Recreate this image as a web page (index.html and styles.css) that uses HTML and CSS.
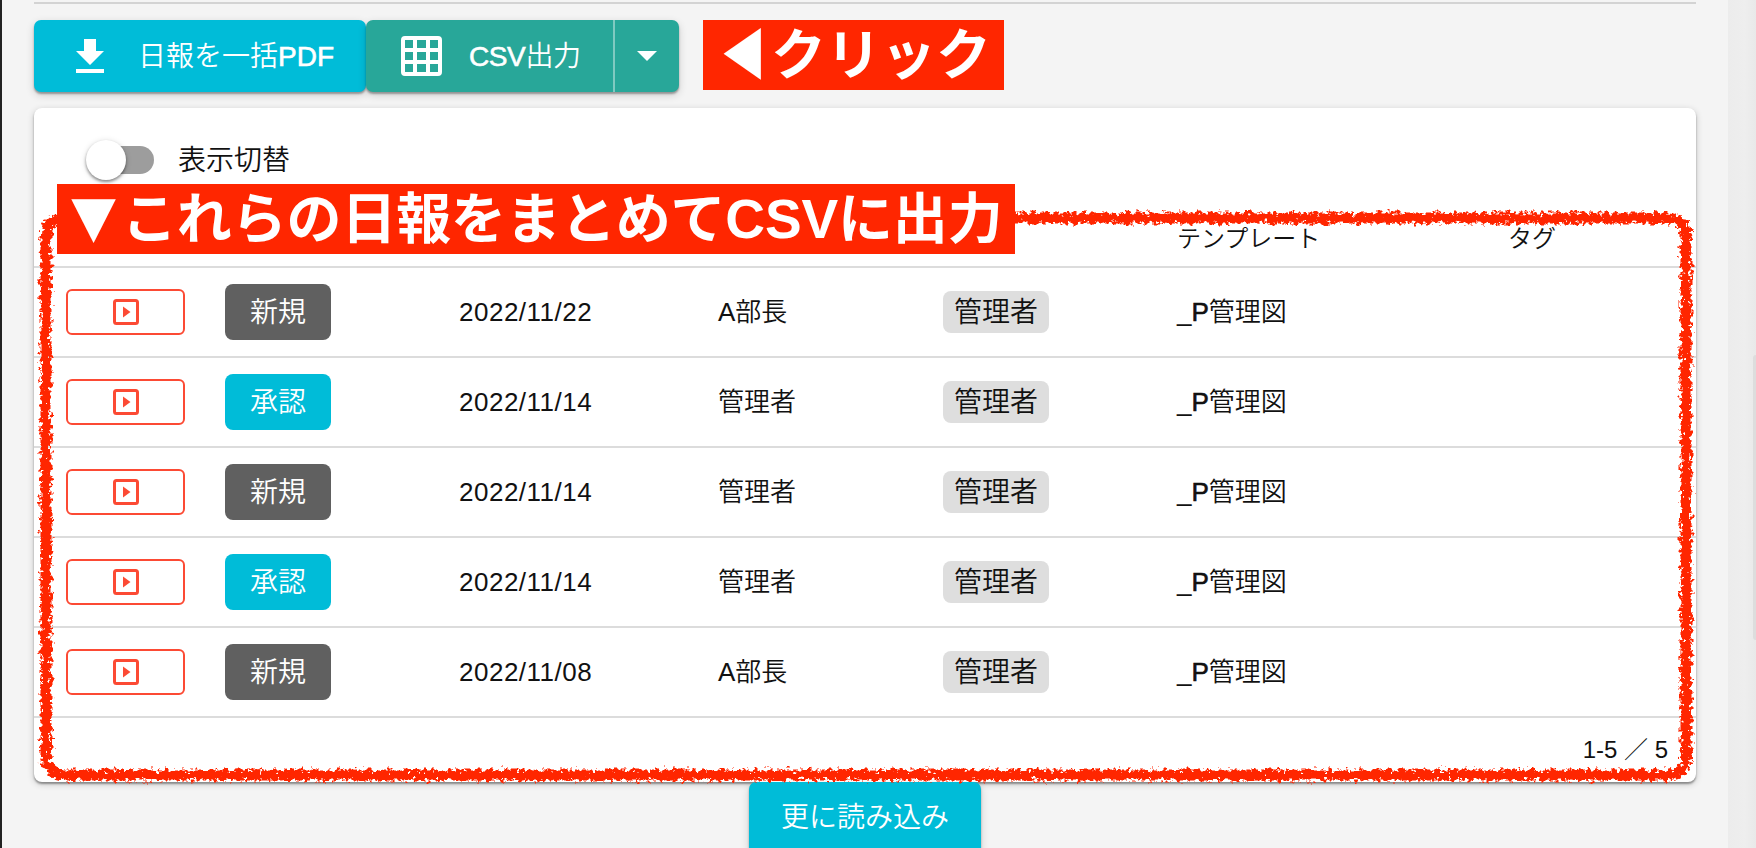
FILE: index.html
```html
<!DOCTYPE html>
<html lang="ja">
<head>
<meta charset="utf-8">
<title>日報一覧</title>
<link rel="stylesheet" href="styles.css">
</head>
<body>
<svg class="defs" width="0" height="0">
  <symbol id="play" viewBox="0 0 26 26"><rect x="1.500" y="1.500" width="23" height="23" rx="2" fill="none" stroke="currentColor" stroke-width="3"/><path d="M10 7.500v11l7.500-5.500z" fill="currentColor"/></symbol>
</svg>
<div class="app">
  <main class="page">
    <hr class="rule">
    <div class="toolbar">
      <button class="btn btn-pdf">
        <svg class="ico-dl" width="28" height="34" viewBox="0 0 28 34"><path d="M8 0h12v12h8L14 26 0 12h8zM0 30h28v4H0z" fill="#fff"/></svg>
        <span class="label">日報を一括<span class="latin">PDF</span></span>
      </button>
      <button class="btn btn-csv">
        <svg class="ico-grid" width="41" height="40" viewBox="0 0 41 40"><path fill="#fff" fill-rule="evenodd" d="M4 0h33q4 0 4 4v32q0 4-4 4H4q-4 0-4-4V4q0-4 4-4zM4 4v8h8V4zM16 4v8h9V4zM29 4v8h8V4zM4 16v8h8v-8zM16 16v8h9v-8zM29 16v8h8v-8zM4 28v8h8v-8zM16 28v8h9v-8zM29 28v8h8v-8z"/></svg>
        <span class="label csv"><span class="latin">CSV</span>出力</span>
        <span class="caret"><svg width="20" height="10" viewBox="0 0 20 10"><path d="M0 0h20L10 10z" fill="#fff"/></svg></span>
      </button>
      <div class="note note-click"><span class="tri tri-left">◀</span>クリック</div>
    </div>
    <section class="card">
      <div class="switch-row"><span class="switch"><span class="thumb"></span></span><span class="label">表示切替</span></div>
      <div class="row head"><span></span><span></span><span></span><span></span><span></span><span>テンプレート</span><span>タグ</span></div>
      <div class="row"><span class="play"><svg width="26" height="26"><use href="#play"/></svg></span><span class="state">新規</span><span class="date">2022/11/22</span><span>A部長</span><span class="chip">管理者</span><span>_<span class="latin">P</span>管理図</span><span></span></div>
      <div class="row"><span class="play"><svg width="26" height="26"><use href="#play"/></svg></span><span class="state ok">承認</span><span class="date">2022/11/14</span><span>管理者</span><span class="chip">管理者</span><span>_<span class="latin">P</span>管理図</span><span></span></div>
      <div class="row"><span class="play"><svg width="26" height="26"><use href="#play"/></svg></span><span class="state">新規</span><span class="date">2022/11/14</span><span>管理者</span><span class="chip">管理者</span><span>_<span class="latin">P</span>管理図</span><span></span></div>
      <div class="row"><span class="play"><svg width="26" height="26"><use href="#play"/></svg></span><span class="state ok">承認</span><span class="date">2022/11/14</span><span>管理者</span><span class="chip">管理者</span><span>_<span class="latin">P</span>管理図</span><span></span></div>
      <div class="row"><span class="play"><svg width="26" height="26"><use href="#play"/></svg></span><span class="state">新規</span><span class="date">2022/11/08</span><span>A部長</span><span class="chip">管理者</span><span>_<span class="latin">P</span>管理図</span><span></span></div>
      <div class="foot">1-5 ／ 5</div>
    </section>
    <button class="btn more">更に読み込み</button>
  </main>
  <aside class="rail"><span class="rail-thumb"></span></aside>

  <svg class="crayon" width="1756" height="848" viewBox="0 0 1756 848">
    <filter id="rough" filterUnits="userSpaceOnUse" x="0" y="180" width="1756" height="640">
      <feTurbulence type="fractalNoise" baseFrequency="0.22" numOctaves="3" seed="4" result="n"/>
      <feDisplacementMap in="SourceGraphic" in2="n" scale="11" xChannelSelector="R" yChannelSelector="G" result="d"/>
      <feTurbulence type="fractalNoise" baseFrequency="0.25" numOctaves="2" seed="9" result="m"/>
      <feColorMatrix in="m" type="matrix" values="0 0 0 0 0  0 0 0 0 0  0 0 0 0 0  0 0 0 14 -4" result="mask"/>
      <feComposite in="d" in2="mask" operator="in"/>
    </filter>
    <g fill="none" stroke="#ff2600" filter="url(#rough)">
      <rect x="46" y="218" width="1640" height="557" rx="18" stroke-width="11"/>
    </g>
    <filter id="core" filterUnits="userSpaceOnUse" x="0" y="180" width="1756" height="640">
      <feTurbulence type="fractalNoise" baseFrequency="0.16" numOctaves="3" seed="2" result="n"/>
      <feDisplacementMap in="SourceGraphic" in2="n" scale="8" xChannelSelector="R" yChannelSelector="G"/>
    </filter>
    <rect x="45.500" y="218" width="1641" height="557.500" rx="18" fill="none" stroke="#ff2600" stroke-width="5" filter="url(#core)"/>
  </svg>
  <div class="note note-list"><span class="tri tri-down">▼</span>これらの日報をまとめてCSVに出力</div>
</div>
</body>
</html>
```
FILE: styles.css
```css
* { box-sizing: border-box; }
body {
  margin: 0;
  height: 848px;
  overflow: hidden;
  background: #f4f4f4;
  color: #111;
  font: 350 26px/1 "Liberation Sans", "Noto Sans CJK JP", sans-serif;
}
.defs { position: absolute; }
.crayon { position: absolute; left: -2px; top: 0; pointer-events: none; }
.app {
  position: relative;
  display: flex;
  height: 848px;
  overflow: hidden;
  border-left: 2px solid #222;
}
.page {
  flex: 1;
  display: flex;
  flex-direction: column;
  padding: 2px 32px 0 32px;
}
.rail {
  width: 28px;
  padding: 355px 0 0 25px;
  background: linear-gradient(90deg, #ececec, #eee 60%, #e9e9e9);
}
.rail-thumb { display: block; height: 285px; background: #ddd; border-radius: 3px 0 0 3px; }
.rule { width: 100%; height: 2px; margin: 0 0 16px; border: 0; background: #d3d3d3; flex: none; }

.toolbar { display: flex; flex: none; height: 72px; margin-bottom: 16px; }
.btn {
  display: flex;
  align-items: center;
  height: 72px;
  padding: 0;
  border: 0;
  border-radius: 7px;
  background: #00bcd8;
  color: #fff;
  font: inherit;
  font-size: 28px;
  white-space: nowrap;
  box-shadow: 0 2px 2px rgba(0,0,0,.32), 0 3px 8px rgba(0,0,0,.16);
}
.label { padding-top: 2px; }
.csv { letter-spacing: -.4px; }
.latin { -webkit-text-stroke: .6px currentColor; }
.btn-pdf { width: 332px; padding-left: 42px; }
.ico-dl { margin-right: 34px; }
.btn-csv { width: 313px; padding-left: 35px; background: #28a799; }
.ico-grid { margin-right: 27px; }
.caret {
  display: flex;
  align-items: center;
  justify-content: center;
  width: 66px;
  height: 72px;
  margin-left: auto;
  border-left: 2px solid #7fcac1;
}

.note {
  height: 70px;
  background: #ff2600;
  color: #fff;
  font-size: 55px;
  font-weight: 700;
  line-height: 70px;
  white-space: nowrap;
}
.tri { display: inline-block; width: 55px; text-align: center; }
.tri-left { transform: scaleX(.83); }
.tri-down { transform: translate(-1px, -3px) scale(1.38, 1.36); }
.note-click { width: 301px; margin-left: 24px; padding-left: 13px; }
.note-list { position: absolute; left: 55px; top: 184px; width: 958px; padding-left: 10px; letter-spacing: -.15px; }

.card {
  flex: none;
  height: 674px;
  border-radius: 8px;
  background: #fff;
  box-shadow: 0 2px 2px rgba(0,0,0,.35), 0 2px 7px rgba(0,0,0,.2);
}
.switch-row {
  display: flex;
  align-items: center;
  height: 104px;
  padding-left: 58px;
  font-size: 28px;
}
.switch {
  width: 62px;
  height: 28px;
  margin-right: 24px;
  border-radius: 14px;
  background: #9d9d9d;
}
.thumb {
  display: block;
  width: 40px;
  height: 40px;
  margin: -6px 0 0 -6px;
  border-radius: 50%;
  background: #fff;
  box-shadow: 0 2px 3px rgba(0,0,0,.4), 0 1px 6px rgba(0,0,0,.15);
}
.row {
  display: grid;
  grid-template-columns: 159px 234px 259px 225px 234px 331px 1fr;
  align-items: center;
  height: 90px;
  padding-left: 32px;
  border-bottom: 2px solid #dcdcdc;
}
.head { height: 56px; font-size: 24px; }
.date { letter-spacing: .5px; }
.play {
  display: flex;
  align-items: center;
  justify-content: center;
  width: 119px;
  height: 46px;
  border: 2px solid #fc4a34;
  border-radius: 6px;
  color: #fc4a34;
}
.state, .chip {
  display: flex;
  align-items: center;
  justify-content: center;
  width: 106px;
  padding-top: 1px;
  border-radius: 8px;
  font-size: 28px;
}
.state { height: 56px; background: #606060; color: #fff; }
.ok { background: #00bcd8; }
.chip { height: 42px; background: #dedede; }
.foot { padding: 20px 28px 0 0; text-align: right; font-size: 24px; }
.more { width: 232px; align-self: center; justify-content: center; flex: none; }
```
